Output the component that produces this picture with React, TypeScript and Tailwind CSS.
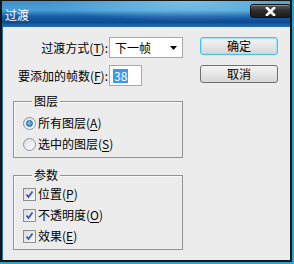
const font = "font-['SimSun','Noto_Sans_CJK_SC',sans-serif]";

function Mn({ c }: { c: string }) {
  return (
    <>
      (<span className="underline underline-offset-2">{c}</span>)
    </>
  );
}

function Radio({ checked, children }: { checked?: boolean; children: React.ReactNode }) {
  return (
    <div className="flex h-[16px] items-center">
      <span className="flex h-[13px] w-[13px] items-center justify-center rounded-full border border-[#8d949c] bg-[linear-gradient(135deg,#d8dde2,#ffffff)]">
        {checked && (
          <span className="h-[7px] w-[7px] rounded-full border border-[#1a5fa0] bg-[radial-gradient(circle_at_40%_35%,#7cc4f4,#1f7fd0)]" />
        )}
      </span>
      <span className="ml-[2px] leading-[16px]">{children}</span>
    </div>
  );
}

function Check({ children }: { children: React.ReactNode }) {
  return (
    <div className="flex h-[16px] items-center">
      <span className="flex h-[13px] w-[13px] items-center justify-center border border-[#8f8f8f] bg-[linear-gradient(135deg,#dcdcdc,#f8f8f8)]">
        <svg width="9" height="9" viewBox="0 0 9 9">
          <path d="M1.5 4.5 L3.5 7 L7.5 1.5" fill="none" stroke="#3b57b8" strokeWidth="1.8" />
        </svg>
      </span>
      <span className="ml-[2px] leading-[16px]">{children}</span>
    </div>
  );
}

function Group({ title, className, children }: { title: string; className: string; children: React.ReactNode }) {
  return (
    <div className={`relative ml-[10px] w-[170px] border border-[#939393] shadow-[inset_1px_1px_0_#fafafa] ${className}`}>
      <span className="absolute -top-[8px] left-[18px] bg-[#ececec] px-[2px] leading-[14px]">{title}</span>
      {children}
    </div>
  );
}

export default function App() {
  return (
    <div className={`h-[264px] w-[294px] bg-[#2ba6d0] pb-[2px] pr-[2px] text-[12px] text-black ${font}`}>
      <div className="flex h-full flex-col border-x-2 border-b-2 border-t border-[#161616] bg-[#1a6eb4]">
        <div className="flex h-[26px] shrink-0 items-start justify-between bg-[radial-gradient(ellipse_at_65%_0%,rgba(170,235,255,0.55),transparent_55%),linear-gradient(to_bottom,#3f8fcb,#4a9fd6_35%,#1a5fa8_58%,#0f4a92_82%,#2472b8)]">
          <span className="ml-[3px] mt-[7px] text-[12px] leading-[14px] text-white">过渡</span>
          <div className="mr-[-1px] mt-[3px] flex h-[14px] w-[41px] items-center justify-center rounded-[3px] border border-[#111] bg-[linear-gradient(to_bottom,#5a5a5a,#2c2c2c_50%,#1c1c1c)] shadow-[inset_0_1px_0_#8a8a8a]">
            <svg width="11" height="9" viewBox="0 0 11 9">
              <path d="M2 1 L9 8 M9 1 L2 8" stroke="#ffffff" strokeWidth="2.6" strokeLinecap="square" />
            </svg>
          </div>
        </div>
        <div className="ml-[1px] flex-1 bg-[#ececec] pt-[10px]">
          <div className="flex">
            <div className="flex w-[180px] flex-col gap-[7px]">
              <div className="flex h-[21px] items-center">
                <span className="w-[106px] pr-[1px] text-right">
                  过渡方式<Mn c="T" />:
                </span>
                <div className="flex h-[21px] w-[74px] items-center justify-between border border-[#a8a8a8] bg-white pl-[5px] pr-[5px]">
                  <span>下一帧</span>
                  <svg width="7" height="4" viewBox="0 0 7 4">
                    <path d="M0 0 H7 L3.5 4 Z" fill="#000" />
                  </svg>
                </div>
              </div>
              <div className="flex h-[21px] items-center">
                <span className="w-[106px] pr-[1px] text-right">
                  要添加的帧数<Mn c="F" />:
                </span>
                <div className="flex h-[21px] w-[33px] items-center border border-[#a8a8a8] bg-white pl-[3px]">
                  <span className="bg-[#3399ff] px-[1px] leading-[14px] text-white">38</span>
                </div>
              </div>
            </div>
            <div className="ml-[17px] flex flex-col gap-[10px]">
              <button className="h-[18px] w-[78px] rounded-[3px] border border-[#3fc6e6] bg-[linear-gradient(to_bottom,#f4f4f4,#e6e6e6_50%,#d6d6d6)] leading-[16px] shadow-[inset_0_0_0_1px_#9fe2f2]">
                确定
              </button>
              <button className="h-[18px] w-[78px] rounded-[3px] border border-[#707070] bg-[linear-gradient(to_bottom,#f4f4f4,#e6e6e6_50%,#d6d6d6)] leading-[16px]">
                取消
              </button>
            </div>
          </div>
          <Group title="图层" className="mt-[15px] h-[57px] pl-[9px] pt-[13px]">
            <div className="flex flex-col gap-[5px]">
              <Radio checked>
                所有图层<Mn c="A" />
              </Radio>
              <Radio>
                选中的图层<Mn c="S" />
              </Radio>
            </div>
          </Group>
          <Group title="参数" className="mt-[17px] h-[75px] pl-[9px] pt-[10px]">
            <div className="flex flex-col gap-[5px]">
              <Check>
                位置<Mn c="P" />
              </Check>
              <Check>
                不透明度<Mn c="O" />
              </Check>
              <Check>
                效果<Mn c="E" />
              </Check>
            </div>
          </Group>
        </div>
      </div>
    </div>
  );
}
